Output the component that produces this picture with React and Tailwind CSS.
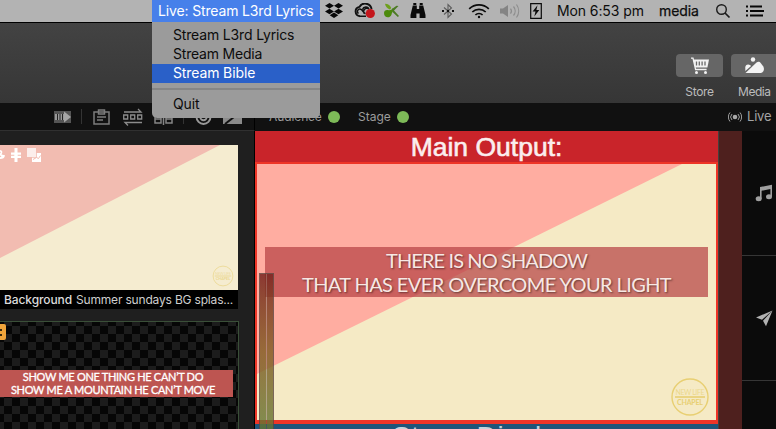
import React from "react";

const INTER = "font-['Inter',sans-serif]";

function Dropbox() {
  return (
    <svg width="20" height="16" viewBox="0 0 20 16" fill="#080808">
      <path d="M5.5 0 10 2.8 5.5 5.6 1 2.8zM14.5 0 19 2.8 14.5 5.6 10 2.8zM5.5 5.7 10 8.5 5.5 11.3 1 8.5zM14.5 5.7 19 8.5 14.5 11.3 10 8.5zM10 9.6 14.3 12.3 10 15 5.7 12.3z" />
    </svg>
  );
}

function CreativeCloud() {
  return (
    <svg width="22" height="16" viewBox="0 0 22 16" fill="none">
      <path d="M6 13.2a4.700 4.700 0 0 1-.6-9.300A6.600 6.600 0 0 1 17.600 6" stroke="#111" strokeWidth="1.900" />
      <path d="M4.500 10.500a2.400 2.400 0 0 1 2.300-4.200c1.700.4 2.500 3.600 4.700 4.500M8.500 6.500c1-3 5.500-3.500 6.500 0M10 10.500c-1.500-3 1-6 4-5M6 13.200h6" stroke="#111" strokeWidth="1.500" />
      <circle cx="16.300" cy="10.500" r="4.600" fill="#c4161c" />
    </svg>
  );
}

function GreenSplash() {
  return (
    <svg width="18" height="16" viewBox="0 0 18 16">
      <path d="M1 10c0-2.500 2-3.500 4-3 2 .5 3.500 0 5-2L11.500 6.500c-2 2-2.500 3-3 5C7.500 15.500 1 15.500 1 10z" fill="#4c8a0c" />
      <path d="M2 .8c3 0 4.800 1.200 6.300 4.200L6.800 6.500C4 5.500 2.500 3.500 2 .8z" fill="#6ea01c" />
      <path d="M9 6 13.500 2.800l2 .2L11 7.500l5 5.500-1.200 1L9.500 9z" fill="#4c7a24" />
    </svg>
  );
}

function Binoculars() {
  return (
    <svg width="16" height="16" viewBox="0 0 16 16" fill="#0a0a0a">
      <path d="M3.300 0h3v2h-3zM9.700 0h3v2h-3zM2.800 2.600h4V6h2.400V2.600h4L15.500 12v3H9.600v-4.500H6.400V15H.5v-3z" />
    </svg>
  );
}

function Bluetooth() {
  return (
    <svg width="14" height="16" viewBox="0 0 14 16" fill="none">
      <path d="M3 4.500 10.500 11 7 14.500v-13L10.500 5 3 11.500" stroke="#5c5c5c" strokeWidth="1.100" />
      <path d="M1 8h2M6 8h2M11 8h2" stroke="#111" strokeWidth="2.200" />
    </svg>
  );
}

function Wifi() {
  return (
    <svg width="22" height="16" viewBox="0 0 22 16" fill="none" stroke="#0b0b0b" strokeWidth="1.700">
      <path d="M1.200 5.800a14 14 0 0 1 19.600 0M4.300 9a9.600 9.600 0 0 1 13.400 0M7.400 12a5.200 5.200 0 0 1 7.200 0" />
      <circle cx="11" cy="14" r="1.200" fill="#0b0b0b" stroke="none" />
    </svg>
  );
}

function Volume() {
  return (
    <svg width="22" height="16" viewBox="0 0 22 16" fill="none" stroke="#8c8c8c" strokeWidth="1.200">
      <path d="M1 5.500h3L9 2v12l-5-3.500H1z" fill="#848484" stroke="none" />
      <path d="M11.500 5.500a4 4 0 0 1 0 5M14.500 3.500a7 7 0 0 1 0 9M17.500 1.500a11 11 0 0 1 0 13" />
    </svg>
  );
}

function Battery() {
  return (
    <svg width="12" height="16" viewBox="0 0 12 16">
      <path d="M.7.7h10.600v14.600H.7z" fill="none" stroke="#0b0b0b" strokeWidth="1.200" />
      <path d="M7.500 2.300 2.600 8.500h2.900L4.300 13.500l5-6.500H6.400z" fill="#0b0b0b" />
    </svg>
  );
}

function SearchIcon() {
  return (
    <svg width="16" height="16" viewBox="0 0 16 16" fill="none" stroke="#1c1c1c" strokeWidth="1.400">
      <circle cx="6.500" cy="6.500" r="4.800" />
      <path d="m10 10 4.500 4.500" strokeWidth="1.700" />
    </svg>
  );
}

function ListIcon() {
  return (
    <svg width="18" height="12" viewBox="0 0 18 12" stroke="#080808" strokeWidth="2">
      <path d="M0 1.500h2M4 1.500h12M0 6h2M4 6h14M0 10.500h2M4 10.500h13" />
    </svg>
  );
}

function MenuBar() {
  return (
    <div className="relative flex h-[23px] shrink-0 border-b border-black bg-[#b3b3b3] text-[14px] text-[#0c0c0c]">
      <div className="relative ml-[152px] h-[22px] w-[168px]">
        <div className="h-[22px] bg-[#4780ea] pl-[6px] text-[14px] leading-[22px] whitespace-nowrap text-white tracking-[-0.15px]">
          Live: Stream L3rd Lyrics
        </div>
        <div className="absolute top-[22px] left-0 z-10 h-[96px] w-[168px] rounded-b-[5px] bg-[#9b9b9b] pt-[4px] text-[14px] leading-[17px] whitespace-nowrap">
          <div className="pb-[2px] pl-[21px] tracking-[-0.16px]">Stream L3rd Lyrics</div>
          <div className="pb-[2px] pl-[21px] tracking-[-0.2px]">Stream Media</div>
          <div className="bg-[#2a60c8] pb-[2px] pl-[21px] text-white tracking-[-0.12px]">Stream Bible</div>
          <div className="mt-[5px] h-[2px] bg-[#868686]" />
          <div className="mt-[5px] pl-[21px] tracking-[-0.1px]">Quit</div>
        </div>
      </div>
      <div className="ml-[4px] flex h-[22px] items-center">
        <Dropbox />
        <div className="ml-[10px] flex"><CreativeCloud /></div>
        <div className="ml-[7px] flex"><GreenSplash /></div>
        <div className="ml-[9px] flex"><Binoculars /></div>
        <div className="ml-[15px] flex"><Bluetooth /></div>
        <div className="ml-[13px] flex"><Wifi /></div>
        <div className="ml-[9px] flex"><Volume /></div>
        <div className="ml-[9px] flex"><Battery /></div>
        <span className="ml-[15px] w-[102px] pb-[1px] whitespace-nowrap tracking-[-0.1px]">Mon 6:53 pm</span>
        <span className="w-[56px] pb-[1px] tracking-[-0.1px] [-webkit-text-stroke:0.25px_#0c0c0c]">media</span>
        <SearchIcon />
        <div className="ml-[15px] flex"><ListIcon /></div>
      </div>
    </div>
  );
}

function Header() {
  return (
    <div className="flex h-[80px] shrink-0 justify-end overflow-hidden bg-linear-to-b from-[#434343] to-[#363636] pt-[31px] text-[12px] text-[#bcbcbc]">
      <div className="flex w-[47px] shrink-0 flex-col items-center">
        <div className="flex h-[23px] w-full items-center justify-center rounded-[4px] bg-[#666]">
          <svg width="20" height="18" viewBox="0 0 20 18">
            <path d="M1 1.200h2l2.600 11.300h11" fill="none" stroke="#f2f2f2" strokeWidth="1.300" />
            <path d="M3.300 2.500H19l-1.600 8H5.200z" fill="#f2f2f2" />
            <path d="M6.500 4.500v4M9.300 4.500v4M12.100 4.500v4M15 4.500v4" stroke="#6a6a6a" strokeWidth="1.300" />
            <circle cx="6.500" cy="15.500" r="1.500" fill="#f2f2f2" />
            <circle cx="15.500" cy="15.500" r="1.500" fill="#f2f2f2" />
          </svg>
        </div>
        <span className="mt-[6px] leading-[18px] tracking-[-0.35px]">Store</span>
      </div>
      <div className="ml-[8px] flex w-[45px] shrink-0 flex-col">
        <div className="flex h-[23px] w-[48px] items-center rounded-[4px] bg-[#666] pl-[14px]">
          <svg width="20" height="17" viewBox="0 0 20 17" fill="#f4f4f4">
            <circle cx="8" cy="2.500" r="2.200" />
            <path d="M.5 16 11.500 5.600c1.600-1.500 3.200-.9 4.200.4l2.600 3.500c1.400 2.500.5 6-2.500 6.500z" />
            <path d="M.3 14V10.500c0-2.500 2.500-3.800 5-2.200l.8.600z" />
          </svg>
        </div>
        <span className="mt-[6px] pl-[7px] leading-[18px] whitespace-nowrap tracking-[-0.45px]">Media</span>
      </div>
    </div>
  );
}

function Toolbar() {
  return (
    <div className="flex h-[28px] shrink-0 items-center bg-[#111] text-[12px] text-[#9c9c9c]">
      <div className="flex h-full w-[255px] shrink-0 items-center border-r border-b border-r-black border-b-[#303030] pl-[54px]">
        <svg width="18" height="14" viewBox="0 0 18 14">
          <path d="M0 1h17v12H0z" fill="#555" />
          <path d="M1 4h10v6H1z" fill="#9a9a9a" />
          <path d="M3.500 4v6M6 4v6M8.500 4v6" stroke="#222" />
          <path d="M10 1.500 17 7l-7 5.500z" fill="#a6a6a6" />
        </svg>
        <div className="ml-[9px] h-[15px] w-px bg-[#343434]" />
        <svg className="ml-[11px]" width="17" height="16" viewBox="0 0 17 16" fill="none" stroke="#7c7c7c" strokeWidth="1.500">
          <path d="M1 3h15v12H1zM5.500 3V1h6v4h-6zM4 8h9M4 11h6" />
        </svg>
        <svg className="ml-[13px]" width="20" height="18" viewBox="0 0 20 18" fill="none" stroke="#8c8c8c" strokeWidth="1.300">
          <path d="M.7 7h4v4h-4zM7.700 7h4v4h-4zM14.700 7h4v4h-4zM1 4h17l-3-3M19 14.500H2l3 3" />
        </svg>
        <svg className="mt-[2px] ml-[11px]" width="20" height="16" viewBox="0 0 20 16" fill="none" stroke="#858585" strokeWidth="1.500">
          <path d="M1 5h6v8H1zM12 5h6v8h-6zM9.500 1v14M1 9h6M12 9h6" />
        </svg>
        <div className="ml-[9px] h-[15px] w-px bg-[#343434]" />
        <svg className="mt-[2px] ml-[11px]" width="17" height="17" viewBox="0 0 17 17" fill="none" stroke="#9a9a9a" strokeWidth="1.900">
          <circle cx="8.500" cy="8" r="7" />
          <circle cx="8.500" cy="8" r="3.200" />
        </svg>
        <svg className="mt-[1px] ml-[11px]" width="19" height="14" viewBox="0 0 19 14">
          <path d="M0 0h19v14H0z" fill="#8a8a8a" />
          <path d="M2 14 18 1.500" stroke="#111" strokeWidth="2" />
        </svg>
      </div>
      <span className="ml-[14px] w-[59px] whitespace-nowrap tracking-[-0.1px]">Audience</span>
      <div className="size-[12px] rounded-full bg-[#7dba58]" />
      <span className="ml-[18px] w-[39px]">Stage</span>
      <div className="size-[12px] rounded-full bg-[#7dba58]" />
      <svg className="ml-[319px]" width="14" height="12" viewBox="0 0 14 12" fill="none" stroke="#a0a0a0" strokeWidth="1">
        <circle cx="7" cy="6" r="2.300" fill="#a8a8a8" stroke="none" />
        <path d="M4 3a4.300 4.300 0 0 0 0 6M10 3a4.300 4.300 0 0 1 0 6M2 1.500a7 7 0 0 0 0 9M12 1.500a7 7 0 0 1 0 9" />
      </svg>
      <span className="ml-[5px] text-[13px] text-[#a4a4a4] tracking-[-0.2px]">Live</span>
    </div>
  );
}

function ChapelLogo({ className, size }) {
  return (
    <svg className={className} width={size} height={size} viewBox="0 0 40 40" fill="none" stroke="#e8cf72">
      <circle cx="20" cy="20" r="18" strokeWidth="1.400" />
      <text x="20" y="18" textAnchor="middle" fontSize="7" fill="#ecd88c" stroke="none" fontFamily="Lato, sans-serif" textLength="29">NEW LIFE</text>
      <path d="M5 20h30" strokeWidth="1.600" />
      <text x="20" y="27.500" textAnchor="middle" fontSize="7" fill="#e8cf72" stroke="none" fontWeight="700" fontFamily="Lato, sans-serif" textLength="26">CHAPEL</text>
    </svg>
  );
}

function SlideList() {
  return (
    <div className="flex w-[254px] shrink-0 flex-col bg-[#1f1f1f] pt-[14px]">
      <div className="relative h-[145px] w-[238px] shrink-0 bg-[#f5ecd0]">
        <svg className="block" width="238" height="145" viewBox="0 0 238 145">
          <path d="M0 0h220L0 113z" fill="#f2bcb1" />
          <g fill="#fff">
            <path d="M0 5c2.500.3 3 2.200 1.500 4.500l3.500.7c-.3 2.800-2 3.800-5 3.800v-1.800l1.500-.9L0 10.500V8.500l.8-1.200L0 6.500z" />
            <path d="M14.500 3h3v4.500H21v2.300h-3.300v.9H21v2.200h-3.500V17h-3v-4.100H11v-2.200h3.300v-.9H11V7.500h3.500z" />
            <path d="M27 3h9v9h-9z" opacity=".75" />
            <path d="M36.800 8H41v9h-9v-4.200h4.800z" />
            <path d="m33 14.500 3.500-2 2 1 2-3" stroke="#f2bcb1" fill="none" />
          </g>
        </svg>
        <ChapelLogo className="absolute right-[4px] bottom-[3px] opacity-70" size={22} />
      </div>
      <div className="h-[19px] w-[238px] shrink-0 bg-black pl-[4px] text-[12px] leading-[19px] whitespace-nowrap text-[#cfcfcf]">
        <span className="font-medium tracking-[-0.1px] text-[#dcdcdc]">Background</span>
        <span className="ml-[4px] tracking-[-0.18px]">Summer sundays BG splas...</span>
      </div>
      <div className="mt-[12px] flex h-[109px] w-[239px] shrink-0 flex-col border-t border-r border-[#3a4f38] bg-[repeating-conic-gradient(#1c1c1c_0_25%,#060606_0_50%)] [background-size:16px_16px] [background-position:4px_4px]">
        <div className="mt-[2px] flex h-[16px] w-[6px] flex-col items-start justify-center gap-[3px] rounded-r-[2px] bg-[#f1a53b]">
          <div className="size-[2px] bg-[#3a2b10]" />
          <div className="size-[2px] bg-[#3a2b10]" />
        </div>
        <div className="mt-[30px] h-[27px] w-[233px] bg-[#bd5551] text-center font-['Lato',sans-serif] text-[11px] leading-[13px] whitespace-nowrap text-white [-webkit-text-stroke:0.3px_#fff]">
          <div className="pr-[7px] tracking-[-0.3px]">SHOW ME ONE THING HE CAN’T DO</div>
          <div className="pr-[7px] tracking-[-0.3px]">SHOW ME A MOUNTAIN HE CAN’T MOVE</div>
        </div>
      </div>
    </div>
  );
}

function Output() {
  return (
    <div className="relative ml-px flex w-[463px] shrink-0 flex-col overflow-hidden bg-[#1e5579]">
      <div className="h-[31px] shrink-0 bg-[#c9242a] text-center font-['Liberation_Sans',sans-serif] text-[26.500px] leading-[33px] text-[#fbeeee] [-webkit-text-stroke:0.6px_#fbeeee]">
        Main Output:
      </div>
      <div className="relative h-[262px] shrink-0 border-x-2 border-t-2 border-b-4 border-[#ee3527] bg-[#f5eac5]">
        <svg className="block" width="459" height="256" viewBox="0 0 459 256">
          <path d="M0 0h425L0 210z" fill="#ffada1" />
        </svg>
        <div className="absolute top-[83px] left-[8px] h-[50px] w-[443px] bg-[#b53f42]/70 pt-[1px] text-center font-['Lato',sans-serif] text-[20px] leading-[24px] whitespace-nowrap text-[#f7e8e4] [text-shadow:1px_1px_2px_#00000080]">
          <div className="tracking-[-0.9px]">THERE IS NO SHADOW</div>
          <div className="tracking-[-0.6px]">THAT HAS EVER OVERCOME YOUR LIGHT</div>
        </div>
        <ChapelLogo className="absolute right-[6px] bottom-[3px]" size={40} />
      </div>
      <div className="h-[5px] shrink-0 overflow-hidden text-center font-['Liberation_Sans',sans-serif] text-[28px] leading-[32px] text-[#c4d4de]">
        <div className="-mt-[3px] tracking-[0.6px]">Stage Display:</div>
      </div>
      <div className="absolute top-[142px] left-[4px] flex h-[156px] w-[15px] gap-px border border-b-0 border-[#59403c]/60 bg-[#6c5a48]/50">
        <div className="flex-1 bg-linear-to-b from-[#7a1616]/70 via-[#8a6020]/70 via-50% to-[#5e7f2c]/60" />
        <div className="flex-1 bg-linear-to-b from-[#7a1616]/70 via-[#8a6020]/70 via-50% to-[#5e7f2c]/60" />
      </div>
    </div>
  );
}

function SideRail() {
  return (
    <div className="flex flex-1 flex-col bg-[#0b0b0b]">
      <div className="flex h-[125px] shrink-0 items-center border-b border-[#363636] pl-[13px]">
        <svg width="19" height="18" viewBox="0 0 19 18" fill="#a0a0a0">
          <path d="M5 3 17 .8v12h-1.600V5L6.600 6.800v8H5z" />
          <ellipse cx="3.700" cy="14.800" rx="3" ry="2.500" />
          <ellipse cx="14" cy="12.800" rx="3" ry="2.500" />
        </svg>
      </div>
      <div className="flex h-[125px] shrink-0 items-center border-b border-[#363636] pl-[14px]">
        <svg width="17" height="17" viewBox="0 0 17 17" fill="#b2b2b2">
          <path d="M16.500.5 0 7.500l6 2.300zM16.500.5 7 10.800l3 5.500z" />
        </svg>
      </div>
    </div>
  );
}

export default function App() {
  return (
    <div className={`flex h-[429px] w-[776px] flex-col overflow-hidden bg-[#111] ${INTER}`}>
      <MenuBar />
      <Header />
      <Toolbar />
      <div className="flex h-[298px] shrink-0 overflow-hidden bg-black">
        <SlideList />
        <Output />
        <div className="w-[24px] shrink-0 border-l border-[#45403d] bg-[#4e201e]" />
        <SideRail />
      </div>
    </div>
  );
}
